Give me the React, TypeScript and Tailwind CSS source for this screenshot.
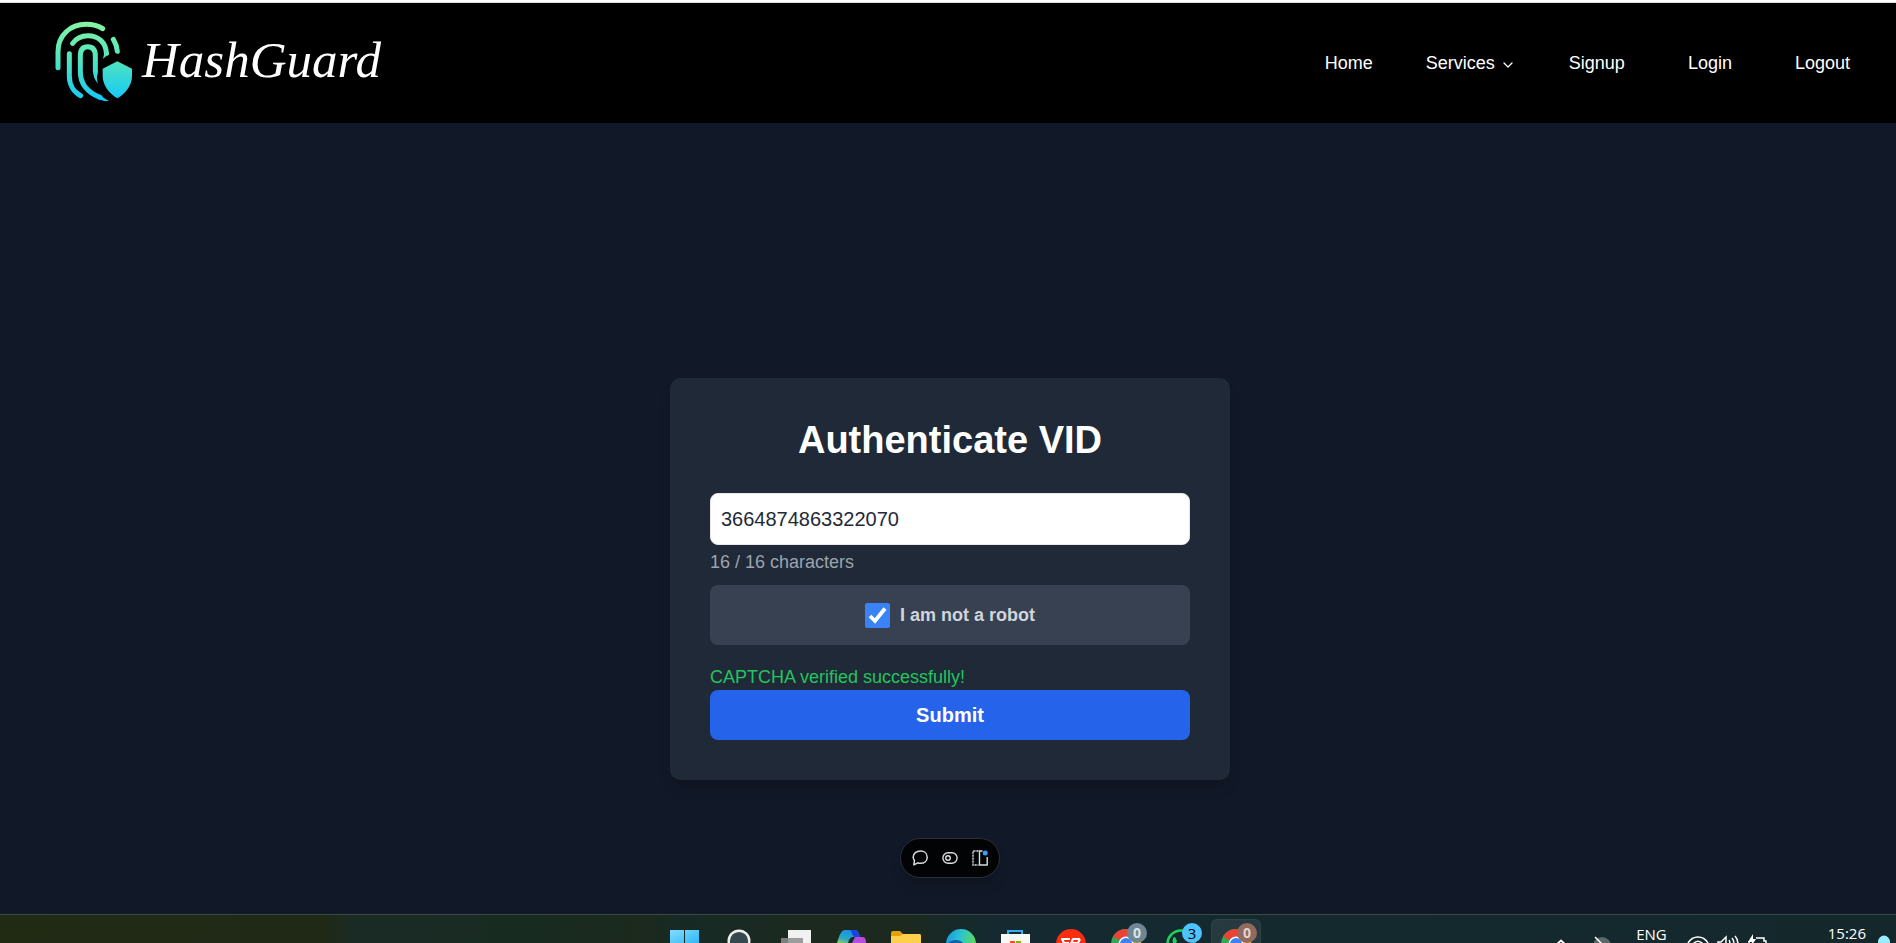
import { useState } from "react";
import type { ReactNode } from "react";

function LogoMark() {
  return (
    <svg viewBox="0 0 270 270" className="h-[90px] w-[90px]" fill="none" aria-hidden="true">
      <defs>
        <linearGradient id="mark" gradientUnits="userSpaceOnUse" x1="0" y1="20" x2="0" y2="255">
          <stop offset="0" stopColor="#86f6a0" />
          <stop offset="0.5" stopColor="#4fe3c0" />
          <stop offset="1" stopColor="#14c8f8" />
        </linearGradient>
      </defs>
      <g stroke="url(#mark)" strokeWidth="15" strokeLinecap="round">
        <path d="M24 158V110C24 60 62 28 108 28C128 28 145 32 158 41" />
        <path d="M68 85C78 70 94 62 114 62C146 62 168 84 169 114" />
        <path d="M58 116V183C58 210 72 232 92 242" />
        <path d="M150 247C113 232 91 206 91 170V122C91 104 99 95 113 95C128 95 136 104 136 122V168" />
        <path d="M190 73C197 85 201 97 202 109" />
      </g>
      <g fill="url(#mark)">
        <path d="M162 112H177V119C167 123 162 128 158 133C161 127 162 120 162 112Z" />
        <path d="M129 166H143V176C139 187 141 196 144 206C134 196 129 182 129 166Z" />
        <path d="M146 238C156 246 166 252 177 258C164 259 155 257 144 251Z" />
        <path d="M202 139L246 161V182C246 212 226 236 202 250C178 236 158 212 158 182V161Z" />
      </g>
    </svg>
  );
}

function NavLink({ children }: { children: ReactNode }) {
  return (
    <a href="#" className="px-[10px]">
      {children}
    </a>
  );
}

function Header() {
  return (
    <header className="flex h-[120px] shrink-0 items-center justify-between bg-black pr-9 pl-[50px] text-white">
      <a href="#" className="flex items-center gap-0.5 pb-1.5">
        <LogoMark />
        <span className="font-['Liberation_Serif',serif] text-[51px] leading-none italic">HashGuard</span>
      </a>
      <nav className="flex items-center gap-[43px] text-[18px] leading-6">
        <NavLink>Home</NavLink>
        <button type="button" className="flex items-center gap-[5px]">
          Services
          <svg viewBox="0 0 16 16" className="mt-1 size-4" fill="none" stroke="currentColor" strokeWidth="1.3" strokeLinecap="round" strokeLinejoin="round">
            <path d="M4 6L8 10L12 6" />
          </svg>
        </button>
        <NavLink>Signup</NavLink>
        <NavLink>Login</NavLink>
        <NavLink>Logout</NavLink>
      </nav>
    </header>
  );
}

function AuthCard() {
  const [vid, setVid] = useState("3664874863322070");
  const [checked, setChecked] = useState(true);
  return (
    <form className="w-full max-w-[560px] rounded-[10px] bg-[#1f2937] p-10 shadow-lg" onSubmit={(e) => e.preventDefault()}>
      <h1 className="mb-[30px] text-center text-[38px] leading-[45px] font-bold text-white">Authenticate VID</h1>
      <input
        type="text"
        aria-label="VID"
        maxLength={16}
        value={vid}
        onChange={(e) => setVid(e.target.value)}
        className="block h-[52px] w-full rounded-[8px] border border-[#e5e7eb] bg-white px-[10px] text-[20px] text-[#1f2937] outline-none"
      />
      <p className="mt-[5px] mb-[10px] text-[18px] leading-[25px] text-[#9ca3af]">{vid.length} / 16 characters</p>
      <div className="flex h-[60px] items-center justify-center gap-[10px] rounded-[8px] bg-[#374151]">
        <span className="relative size-[25px]">
          <input
            id="robot"
            type="checkbox"
            checked={checked}
            onChange={(e) => setChecked(e.target.checked)}
            className="block size-[25px] appearance-none rounded-[2px] bg-white checked:bg-[#3b82f6]"
          />
          <svg viewBox="0 0 25 25" className="pointer-events-none absolute inset-0" fill="none" stroke="white" strokeWidth="3.8">
            <path d="M5 13L10 18L20 5.5" />
          </svg>
        </span>
        <label htmlFor="robot" className="text-[18px] leading-[25px] font-bold text-[#d1d5db]">
          I am not a robot
        </label>
      </div>
      <p className="mt-5 text-[18px] leading-[25px] text-[#22c55e]">CAPTCHA verified successfully!</p>
      <button type="submit" className="h-[50px] w-full rounded-[8px] bg-[#2563eb] text-[20px] font-bold text-white">
        Submit
      </button>
    </form>
  );
}

function Toolbar() {
  return (
    <div className="mt-[58px] flex h-10 w-[100px] items-center justify-center gap-[14px] rounded-full border border-[#2b2f38] bg-[#020305] text-[#dcdcdc] shadow-lg">
      <button type="button" aria-label="Comment">
        <svg viewBox="0 0 16 16" className="size-4" fill="none" stroke="currentColor" strokeWidth="1.5" strokeLinejoin="round">
          <path d="M8.5 1C12.4 1 15.2 3.6 15.2 7.2C15.2 10.9 12.3 13.3 8.6 13.3C7.5 13.3 6.6 13.2 5.8 12.8L1.8 14.8L2.5 10.4C1.6 9.4 1.2 8.3 1.2 7C1.3 3.5 4.4 1 8.5 1Z" />
        </svg>
      </button>
      <button type="button" aria-label="Toggle">
        <svg viewBox="0 0 16 16" className="size-4" fill="none" stroke="currentColor" strokeWidth="1.4">
          <rect x="0.9" y="2.8" width="14.2" height="10.4" rx="5.2" />
          <circle cx="6" cy="8" r="2.3" />
        </svg>
      </button>
      <button type="button" aria-label="Layout">
        <svg viewBox="0 0 16 16" className="size-4" fill="none" stroke="currentColor" strokeWidth="1.4">
          <path d="M6.5 1H1V15H6.5" strokeDasharray="2.2 0.8" />
          <path d="M10.5 1H7.5V15H15.2V7" strokeLinejoin="round" />
          <circle cx="13.2" cy="3" r="2.5" fill="#3b9bff" stroke="none" />
        </svg>
      </button>
    </div>
  );
}

function AppIcon({ label, badge, active, children }: { label: string; badge?: [string, string]; active?: boolean; children: ReactNode }) {
  return (
    <button type="button" aria-label={label} className="relative h-[28px] w-[55px] overflow-hidden">
      {active && <span className="absolute top-1 right-px left-1 h-[50px] rounded-[6px] border border-white/5 bg-white/8" />}
      <svg viewBox="0 0 55 28" className="absolute inset-0 h-[28px] w-[55px]">
        {children}
      </svg>
      {badge && (
        <span className={`absolute top-2 left-[30px] flex size-5 items-center justify-center rounded-full font-['Open_Sans',sans-serif] leading-none ${badge[1]}`}>
          {badge[0]}
        </span>
      )}
    </button>
  );
}

function Chrome() {
  return (
    <g>
      <circle cx="29" cy="29" r="15" fill="#34a853" />
      <path d="M29 29L16 21.5A15 15 0 0 1 42 21.5Z" fill="#ea4335" />
      <path d="M29 29L42 21.5A15 15 0 0 1 42 37Z" fill="#fbbc04" />
      <circle cx="29" cy="29" r="7.5" fill="#fff" />
      <circle cx="29" cy="29" r="6" fill="#3b82f6" />
    </g>
  );
}

function TaskbarApps() {
  return (
    <div className="flex pl-[23px]">
      <AppIcon label="Start">
        <defs>
          <linearGradient id="win" x1="0" y1="0" x2="1" y2="1">
            <stop offset="0" stopColor="#86dcff" />
            <stop offset="1" stopColor="#28b8f5" />
          </linearGradient>
        </defs>
        <path d="M13 15H27V29H13ZM28 15H42V29H28Z" fill="url(#win)" />
      </AppIcon>
      <AppIcon label="Search">
        <circle cx="27" cy="26" r="10.3" fill="#35484b" stroke="#eeeeee" strokeWidth="2.4" />
      </AppIcon>
      <AppIcon label="Task view">
        <path d="M21 15H44V28H21Z" fill="#f1f1f1" />
        <path d="M14 23H36V28H14Z" fill="#8d8d8d" opacity="0.85" />
      </AppIcon>
      <AppIcon label="Copilot">
        <defs>
          <linearGradient id="cop" x1="0.5" y1="0" x2="0" y2="1">
            <stop offset="0" stopColor="#1692e8" />
            <stop offset="0.6" stopColor="#2aa8c8" />
            <stop offset="1" stopColor="#9bd04a" />
          </linearGradient>
        </defs>
        <path d="M22 15H34C36 16 37 19 38 22H31C28 22 27 25 26 28H15C17 22 18 17 22 15Z" fill="url(#cop)" />
        <path d="M28 15H33C36 15 37 18 38 22H32C30 20 30 17 28 15Z" fill="#1b45d8" />
        <path d="M33 22H41C43 22 44 24 44 28H30Z" fill="#b94be0" />
      </AppIcon>
      <AppIcon label="File Explorer">
        <path d="M14 18Q14 16 16 16H23L26 19H42V28H14Z" fill="#e5a107" />
        <path d="M14 21H23L26 19H43Q44 19 44 21V28H14Z" fill="#ffd04c" />
      </AppIcon>
      <AppIcon label="Edge">
        <defs>
          <linearGradient id="edge" x1="0" y1="0" x2="1" y2="0.3">
            <stop offset="0" stopColor="#1b8fe0" />
            <stop offset="0.5" stopColor="#2bc3d2" />
            <stop offset="1" stopColor="#5ed95e" />
          </linearGradient>
        </defs>
        <circle cx="29" cy="29" r="15" fill="url(#edge)" />
        <path d="M16 28C20 24 28 24 31 28Z" fill="#0d62ad" />
      </AppIcon>
      <AppIcon label="Store">
        <path d="M21 20V16H35V20" fill="none" stroke="#35aef0" strokeWidth="2" />
        <path d="M14 19H43V28H14Z" fill="#f7f7f7" />
        <path d="M23 26H28V28H23Z" fill="#f25022" />
        <path d="M29 26H34V28H29Z" fill="#7fba00" />
      </AppIcon>
      <AppIcon label="Workspace">
        <circle cx="29" cy="29" r="15" fill="#fb2c10" />
        <path d="M28 24H20L22 28H27M38 24H31L29 29M38 24L36 28H31" fill="none" stroke="#fff" strokeWidth="2.2" strokeLinejoin="round" />
      </AppIcon>
      <AppIcon label="Chrome" badge={["0", "bg-[#6f8792] text-[14px] text-[#dbe3e6] font-bold"]}>
        <Chrome />
      </AppIcon>
      <AppIcon label="WhatsApp" badge={["3", "bg-[#4cc2ff] text-[15px] text-black"]}>
        <circle cx="29" cy="29" r="13.5" fill="none" stroke="#20cf60" strokeWidth="2.6" />
        <path d="M21 28C20 25 21 22 23 22L25 26L24 28Z" fill="#20cf60" />
      </AppIcon>
      <AppIcon label="Chrome profile" active badge={["0", "bg-[#92695f] text-[14px] text-[#e0d3d0] font-bold"]}>
        <Chrome />
      </AppIcon>
    </div>
  );
}

function Tray() {
  return (
    <div className="flex h-[28px] justify-end pr-1 font-['Open_Sans',sans-serif] text-[15px] leading-4 text-white">
      <svg viewBox="0 0 60 28" className="mr-5 h-[28px] w-[60px]" fill="none" stroke="#fff" strokeWidth="1.8">
        <path d="M0 30L5 25.5L10 30" />
        <circle cx="46" cy="31" r="9" fill="#5b696c" stroke="none" />
        <path d="M39 22L49 32" strokeWidth="1.5" />
      </svg>
      <span className="mt-[11px] mr-5">ENG</span>
      <svg viewBox="0 0 82 28" className="mr-[59px] h-[28px] w-[82px]" fill="none" stroke="#fff" strokeWidth="1.5">
        <path d="M1 28C6 20 16 20 21 28M5 30C9 25 13 25 17 30" />
        <path d="M31 28V27H34L39 22V30M42 25C43 26 43 28 43 30M45 23C47 25 47 28 47 30M48 21C51 24 51 27 51 30" />
        <path d="M69 23H77V26H79V30M62 26V30" />
        <path d="M66 19L61 27H65V30L69 24H66Z" fill="#fff" stroke="none" />
      </svg>
      <span className="mt-[10px] mr-[10px]">15:26</span>
      <svg viewBox="0 0 16 28" className="h-[28px] w-4" fill="#99ebff">
        <path d="M2 28V27A6 6.5 0 0 1 14 27V28Z" />
      </svg>
    </div>
  );
}

export default function App() {
  return (
    <div className="flex h-screen flex-col overflow-hidden bg-[#111827] font-['Liberation_Sans',Arial,sans-serif]">
      <div className="h-[3px] shrink-0 border-b border-[#dcdcdc] bg-white" />
      <Header />
      <main className="flex min-h-0 flex-1 flex-col items-center pt-[255px] pl-1">
        <AuthCard />
        <Toolbar />
      </main>
      <footer className="grid h-[29px] shrink-0 grid-cols-[1fr_auto_1fr] overflow-hidden border-t border-[#3a4a44] bg-[linear-gradient(90deg,#212b14_0%,#1f2916_17%,#1a2b26_19%,#182b20_28%,#1c291d_34%,#162a25_36%,#1d291e_44%,#1b291f_48%,#142a30_52%,#14282c_100%)]">
        <div />
        <TaskbarApps />
        <Tray />
      </footer>
    </div>
  );
}
